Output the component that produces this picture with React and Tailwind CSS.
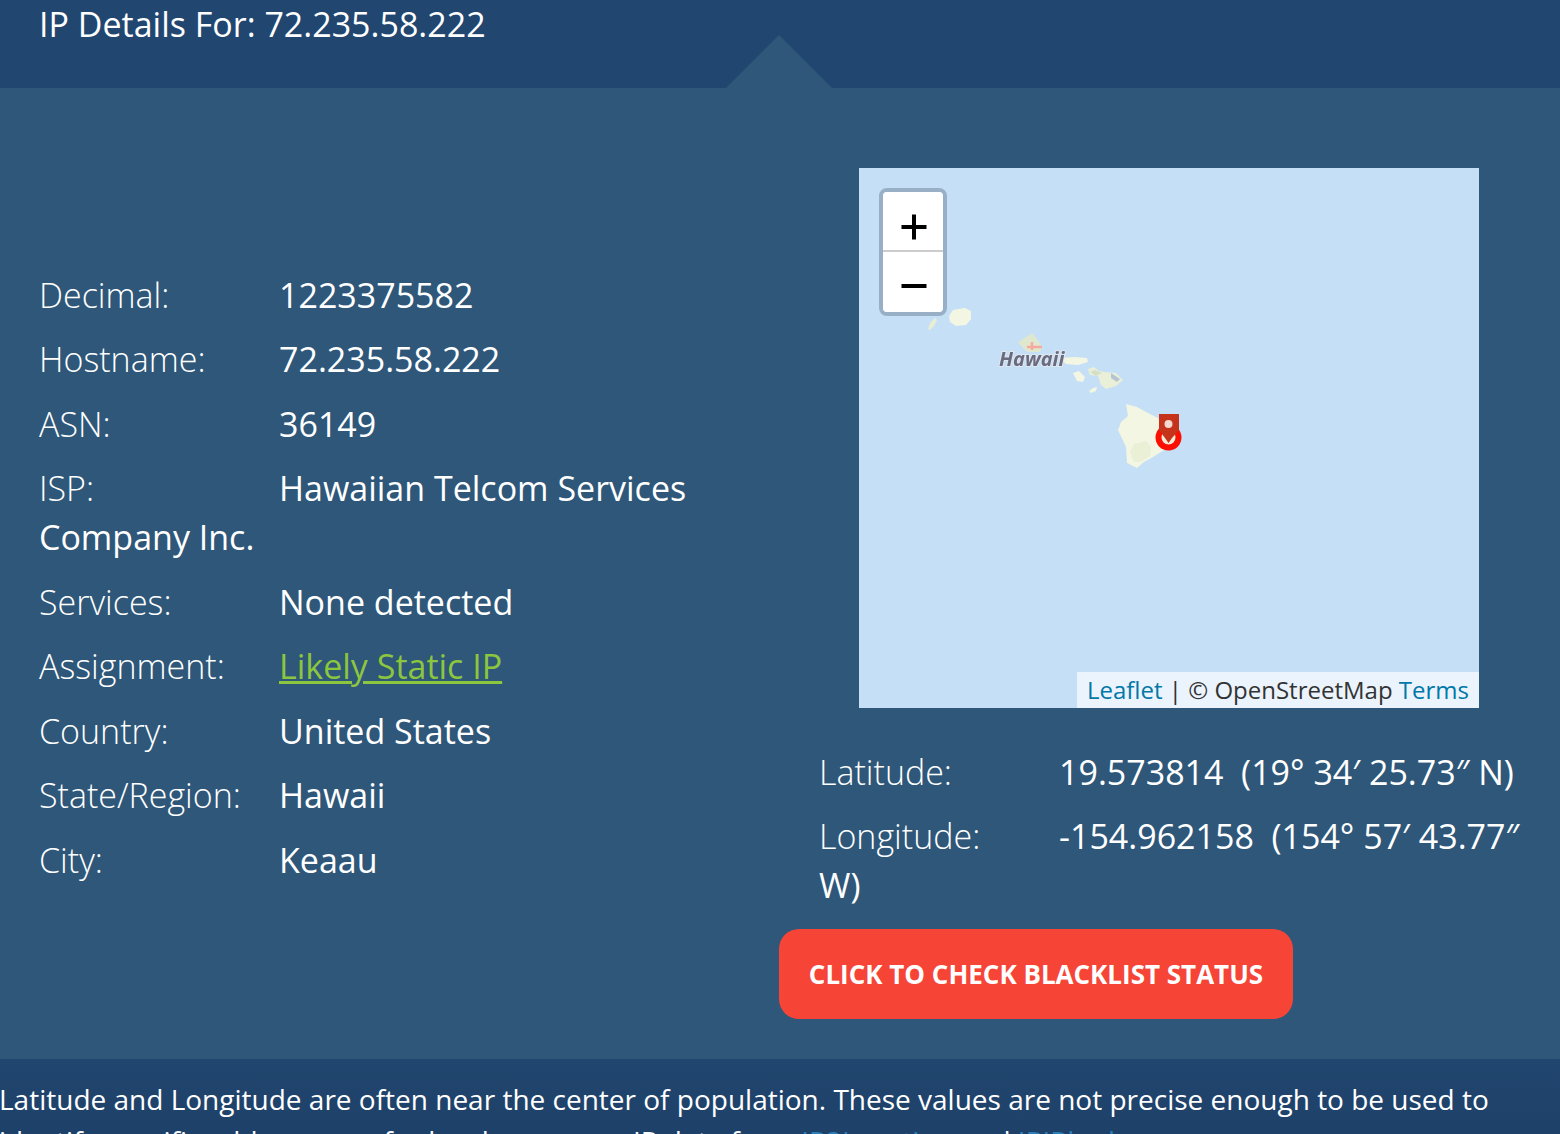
import React from 'react';

const rows = [
  ['Decimal:', '1223375582'],
  ['Hostname:', '72.235.58.222'],
  ['ASN:', '36149'],
  ['ISP:', 'Hawaiian Telcom Services Company Inc.'],
  ['Services:', 'None detected'],
  ['Assignment:', 'Likely Static IP', true],
  ['Country:', 'United States'],
  ['State/Region:', 'Hawaii'],
  ['City:', 'Keaau'],
];

function Row({ label, value, link }) {
  return (
    <p className="mb-[15.5px] text-[34px] leading-[49px] font-normal text-white">
      <span className="inline-block w-[240px] font-light">{label}</span>
      {link ? <a href="#" className="text-[#8cc63f] underline">{value}</a> : value}
    </p>
  );
}

function MapArt() {
  return (
    <svg viewBox="859 168 620 540" className="absolute inset-0 h-full w-full">
      {/* islands */}
      <g fill="#f3f6e2">
        <path d="M949 316 L953 310 L965 308 L971 311 L971 319 L966 325 L956 326 L950 322 Z" />
        <path d="M928 329 L930 323 L935 318 L937 320 L934 326 L930 330 Z" fill="#e8eed4" />
        <path d="M1018 342 L1026 337 L1032 333 L1037 339 L1042 347 L1040 352 L1028 352 L1022 347 Z" fill="#dfe8cf" />
        <path d="M1060 358 L1075 357 L1087 358 L1088 362 L1078 365 L1066 364 Z" />
        <path d="M1073 373 L1079 371 L1085 377 L1083 382 L1077 381 Z" />
        <path d="M1088 369 L1094 367 L1099 371 L1104 372 L1116 373 L1123 380 L1116 386 L1106 389 L1101 385 L1098 376 L1090 375 Z" fill="#eaf0d8" />
        <path d="M1089 391 L1093 388 L1097 387 L1096 391 L1091 393 Z" />
        <path d="M1126 404 L1137 407 L1148 413 L1158 418 L1166 430 L1166 449 L1153 457 L1144 462 L1137 468 L1127 463 L1126 447 L1118 430 L1121 422 L1128 416 Z" />
        <path d="M1130 452 L1134 444 L1146 441 L1151 447 L1150 456 L1140 462 L1134 462 Z" fill="#e9f0d6" />
      </g>
      <path d="M1027 347 H1042 M1032 342 V350" stroke="#f5a9a0" strokeWidth="2.5" fill="none" />
      <path d="M1090 372 L1095 370 L1102 373 L1096 376 Z" fill="#d5dfc6" />
      <path d="M1111 373 L1120 379 L1117 382 L1111 378 Z" fill="#b7c4d4" />
      <text x="999" y="365.5" className="blur-[0.4px]" fontFamily="'Open Sans', sans-serif" fontSize="20" fontWeight="700" fontStyle="italic" fill="#6a6a80" stroke="#dfe7ef" strokeWidth="2" paintOrder="stroke">Hawaii</text>
      {/* marker */}
      <circle cx="1168.5" cy="437.5" r="10" fill="#f3ead8" stroke="#fb0f00" strokeWidth="6" />
      <path d="M1159 414 H1179 V430 L1172 438 L1168.5 443 L1165 438 L1159 430 Z" fill="#c5331b" />
      <circle cx="1168.5" cy="424" r="4" fill="#f5d8d0" />
    </svg>
  );
}

function ZoomButton({ minus }) {
  return (
    <button aria-label={minus ? 'Zoom out' : 'Zoom in'} className={`flex h-[60px] w-[60px] items-center justify-center bg-white pl-px ${minus ? 'rounded-b-[4px] pt-2' : 'rounded-t-[4px] border-b-2 border-[#ccc] pt-3'}`}>
      <svg width="26" height="26" viewBox="0 0 26 26">
        <rect x="0.5" y="11" width="25" height="4" fill="#000" />
        {!minus && <rect x="11" y="0.5" width="4" height="25" fill="#000" />}
      </svg>
    </button>
  );
}

export default function App() {
  return (
    <div className="h-[1134px] overflow-hidden bg-[#2e5779] font-['Open_Sans',sans-serif] text-white">
      {/* Header */}
      <header className="relative h-[88px] bg-[#21466f] pl-[39px]">
        <h1 className="text-[34px] leading-[48px] font-normal">IP Details For: 72.235.58.222</h1>
        <div className="absolute top-[35px] left-[726px] h-0 w-0 border-x-[53px] border-b-[53px] border-x-transparent border-b-[#2e5779]" />
      </header>

      <main className="flex h-[971px]">
        {/* Left column */}
        <section className="w-[779px] pt-[182.6px] pr-10 pl-[39px]">
          {rows.map(([label, value, link]) => (
            <Row key={label} label={label} value={value} link={link} />
          ))}
        </section>

        {/* Right column */}
        <section className="w-[781px] pt-[80px]">
          <div className="relative ml-[80px] h-[540px] w-[620px] bg-[#c5dff6]">
            <MapArt />
            <div className="absolute top-[20px] left-[20px] flex flex-col rounded-[8px] border-4 border-[#98afc5]">
              <ZoomButton />
              <ZoomButton minus />
            </div>
            <div className="absolute right-0 bottom-0 bg-[#ebf3fd] px-[10px] text-[24px] leading-[36px] text-[#333]">
              <a href="#" className="text-[#0078a8]">Leaflet</a> | © OpenStreetMap <a href="#" className="text-[#0078a8]">Terms</a>
            </div>
          </div>
          <div className="mt-[39.6px] pr-[21px] pl-10">
            <p className="mb-[15.5px] text-[34px] leading-[49px]">
              <span className="inline-block w-[240px] font-light">Latitude:</span>
              19.573814&nbsp; (19° 34′ 25.73″ N)
            </p>
            <p className="text-[34px] leading-[49px]">
              <span className="inline-block w-[240px] font-light">Longitude:</span>
              -154.962158&nbsp; (154° 57′ 43.77″ W)
            </p>
          </div>
          <button className="mt-[19px] h-[90px] w-[514px] rounded-[20px] bg-[#f64437] text-[26px] font-bold text-white uppercase">
            Click to check blacklist status
          </button>
        </section>
      </main>

      {/* Footer note */}
      <footer className="bg-linear-to-b from-[#21466f] to-[#1c3f66] pt-[19px] text-[28px] leading-[42px]">
        <p className="-ml-px">
          Latitude and Longitude are often near the center of population. These values are not precise enough to be used to identify specific addresses or for legal purposes. IP data from <a href="#" className="text-[#2b7fb8]">IP2Location</a> and <a href="#" className="text-[#2b7fb8]">IPIPlookup</a>
        </p>
      </footer>
    </div>
  );
}
